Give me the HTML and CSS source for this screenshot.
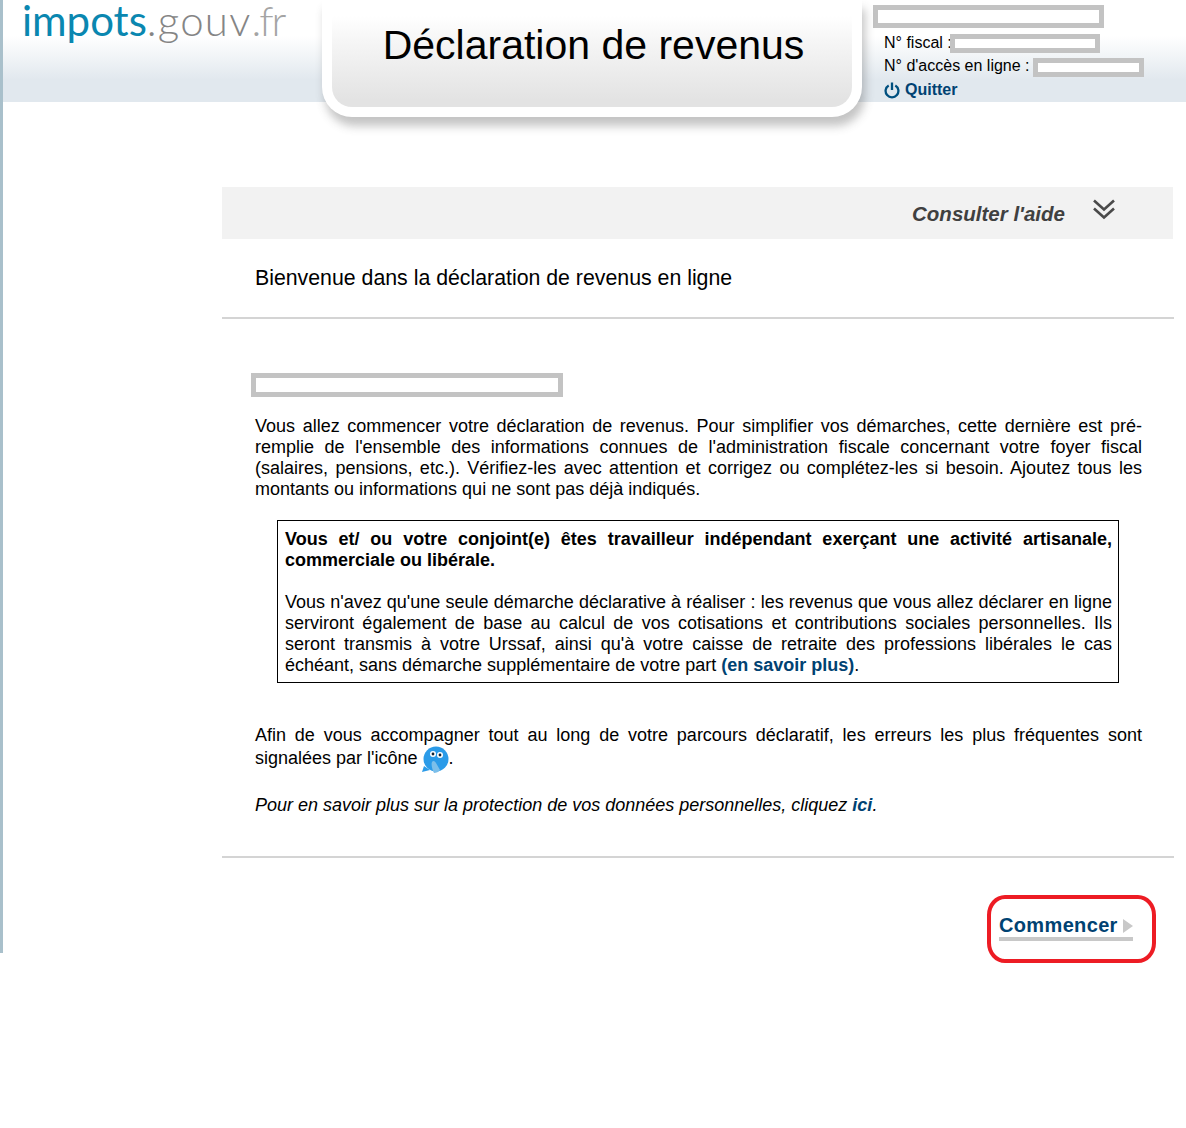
FILE: index.html
```html
<!DOCTYPE html>
<html lang="fr">
<head>
<meta charset="utf-8">
<title>Déclaration de revenus</title>
<link rel="stylesheet" href="styles.css">
</head>
<body>
<div class="page">
  <header class="header">
    <div class="logo"><span class="logo-a">impots</span><span class="logo-b">.gouv</span><span class="logo-c">.fr</span></div>
    <div class="tab"><div class="tab-inner"><h1>Déclaration de revenus</h1></div></div>
    <div class="user">
      <div class="mask mask-name"></div>
      <div class="user-line line-fiscal"><span>N° fiscal :</span><span class="mask mask-fiscal"></span></div>
      <div class="user-line line-acces"><span>N° d'accès en ligne :</span><span class="mask mask-acces"></span></div>
      <a class="quit" href="#">
        <svg class="quit-icon" width="16" height="17" viewBox="0 0 16 17" aria-hidden="true"><path d="M4.7 3.4A6.4 6.4 0 1 0 11.3 3.4" fill="none" stroke="#00507f" stroke-width="2.3"/><path d="M8 0.5v7.5" stroke="#00507f" stroke-width="2.3"/></svg>
        Quitter
      </a>
    </div>
  </header>
  <main class="main">
    <div class="help">
      <span class="help-label">Consulter l'aide</span>
      <svg class="help-icon" width="24" height="24" viewBox="0 0 24 24" aria-hidden="true"><path d="M2 3.5l10 9 10-9M2 11.5l10 9 10-9" fill="none" stroke="#4a4a4a" stroke-width="2.6"/></svg>
    </div>
    <h2 class="welcome">Bienvenue dans la déclaration de revenus en ligne</h2>
    <hr class="rule">
    <div class="content">
      <div class="mask mask-title"></div>
      <p class="para">Vous allez commencer votre déclaration de revenus. Pour simplifier vos démarches, cette dernière est pré-remplie de l'ensemble des informations connues de l'administration fiscale concernant votre foyer fiscal (salaires, pensions, etc.). Vérifiez-les avec attention et corrigez ou complétez-les si besoin. Ajoutez tous les montants ou informations qui ne sont pas déjà indiqués.</p>
      <div class="notice">
        <p class="notice-title">Vous et/ ou votre conjoint(e) êtes travailleur indépendant exerçant une activité artisanale, commerciale ou libérale.</p>
        <p class="notice-text">Vous n'avez qu'une seule démarche déclarative à réaliser : les revenus que vous allez déclarer en ligne serviront également de base au calcul de vos cotisations et contributions sociales personnelles. Ils seront transmis à votre Urssaf, ainsi qu'à votre caisse de retraite des professions libérales le cas échéant, sans démarche supplémentaire de votre part <a class="link" href="#">(en savoir plus)</a>.</p>
      </div>
      <p class="para para-icon">Afin de vous accompagner tout au long de votre parcours déclaratif, les erreurs les plus fréquentes sont signalées par l'icône <svg class="bird" width="28" height="28" viewBox="0 0 28 28" aria-hidden="true"><circle cx="15" cy="13" r="12.5" fill="#2b9be8"/><path d="M3 20l-2 6 8-2z" fill="#2b9be8"/><path d="M13 27c-2-4-3-9-2-11s3-1 4 1l4 7c-1 2-4 3-6 3z" fill="#7cbfea"/><circle cx="12" cy="8" r="3" fill="#fff"/><circle cx="19" cy="9" r="3" fill="#fff"/><circle cx="12" cy="8" r="1.4" fill="#123"/><circle cx="19" cy="9" r="1.4" fill="#123"/></svg>.</p>
      <p class="para privacy">Pour en savoir plus sur la protection de vos données personnelles, cliquez <a class="link" href="#">ici</a>.</p>
    </div>
    <hr class="rule rule-bottom">
    <div class="actions">
      <div class="circled">
        <a class="start" href="#">Commencer<span class="arrow"></span></a>
      </div>
    </div>
  </main>
</div>
</body>
</html>
```

FILE: styles.css
```css
* { box-sizing: border-box; }
html, body { margin: 0; padding: 0; background: #fff; }
body { font-family: "Liberation Sans", Arial, sans-serif; color: #000; height: 1128px; overflow: hidden; }
.page { border-left: 3px solid #a9c0cb; height: 953px; }

.header {
  height: 102px;
  display: flex;
  align-items: flex-start;
  background: linear-gradient(#fff 0, #fff 36px, #e1e8ee 80px, #e1e8ee 100%);
}
.logo {
  width: 319px;
  flex: none;
  padding: 0 0 0 19px;
  font-family: "Lato", sans-serif;
  font-weight: 300;
  font-size: 42px;
  line-height: 40px;
  white-space: nowrap;
}
.logo-a { color: #0a87b0; font-weight: 400; letter-spacing: 0; }
.logo-b { color: #858585; letter-spacing: 1.2px; }
.logo-c { color: #a4a4a4; letter-spacing: -2px; }

.tab {
  width: 540px;
  height: 117px;
  flex: none;
  padding: 0 10px 10px;
  background: #fff;
  border-radius: 0 0 30px 30px;
  box-shadow: 3px 9px 10px rgba(70, 70, 70, .32);
  position: relative;
}
.tab-inner {
  height: 107px;
  border-radius: 0 0 20px 20px;
  background: linear-gradient(#fff 0, #fff 16px, #f6f6f6 40px, #e3e3e3 100px);
  text-align: center;
}
.tab h1 {
  margin: 0;
  padding: 21px 0 0 3px;
  font-size: 41px;
  line-height: 48px;
  font-weight: 400;
}

.user { flex: none; width: 313px; padding: 5px 0 0 11px; font-size: 16px; }
.mask { border: 5px solid #c3c3c3; background: #fff; }
.mask-name { width: 231px; height: 23px; }
.user-line { display: flex; align-items: flex-start; padding-left: 11px; height: 23px; line-height: 23px; }
.line-fiscal { margin-top: 3px; }
.mask-fiscal { width: 150px; height: 19px; margin: 3px 0 0 -2px; }
.mask-acces { width: 111px; height: 19px; margin-top: 4px; margin-left: 3px; }
.quit {
  display: flex;
  align-items: center;
  gap: 5px;
  height: 22px;
  margin-top: 2px;
  padding-left: 11px;
  color: #004272;
  font-weight: 700;
  text-decoration: none;
}

.main { margin-left: 219px; width: 952px; padding-top: 85px; }
.help {
  height: 52px;
  width: 951px;
  background: #f2f2f2;
  display: flex;
  align-items: flex-start;
  justify-content: flex-end;
  padding: 15px 57px 0 0;
}
.help-label { font-size: 20.5px; line-height: 24px; font-weight: 700; font-style: italic; color: #404040; margin-right: 27px; }
.help-icon { margin-top: -5px; }
.welcome { margin: 0; padding: 27px 0 0 33px; height: 78px; font-size: 21.3px; line-height: 24px; font-weight: 400; }
.rule { display: block; margin: 0; height: 2px; border: 0; background: #d4d4d4; }

.content { padding: 54px 32px 0 33px; height: 537px; font-size: 18px; line-height: 21px; }
.mask-title { width: 312px; height: 24px; margin-left: -4px; }
.para { margin: 0; text-align: justify; }
.mask-title + .para { margin-top: 19px; }
.notice { margin: 20px 0 0 22px; width: 842px; height: 163px; border: 1px solid #000; padding: 8px 6px 0 7px; text-align: justify; }
.notice p { margin: 0; }
.notice-title { font-weight: 700; margin-bottom: 21px !important; }
.link { color: #004272; font-weight: 700; text-decoration: none; }
.para-icon { margin-top: 42px; }
.bird { vertical-align: -10px; margin: 0 0 0 -2px; }
.privacy { margin-top: 21px; font-style: italic; }

.actions { display: flex; justify-content: flex-end; padding: 37px 18px 0 0; }
.circled { width: 169px; height: 68px; border: 4px solid #ed1c24; border-radius: 18px / 20px; padding: 15px 0 0 8px; }
.start {
  display: inline-flex;
  align-items: center;
  width: 134px;
  height: 27px;
  border-bottom: 4px solid #c8c8c8;
  color: #004272;
  font-size: 20px;
  font-weight: 700;
  letter-spacing: .35px;
  text-decoration: none;
}
.arrow { margin-left: 5px; width: 0; height: 0; border-left: 10px solid #c8c8c8; border-top: 7px solid transparent; border-bottom: 7px solid transparent; }
```
